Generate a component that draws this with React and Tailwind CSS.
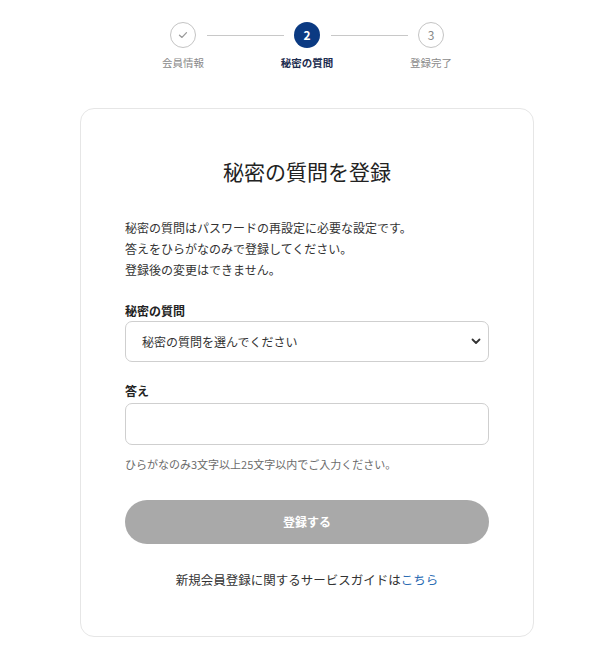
import React from "react";

const font = { fontFamily: '"Noto Sans CJK JP", "Noto Sans", sans-serif' };

function Steps() {
  return (
    <div className="flex items-center pt-[22px]">
      <div className="flex flex-col items-center w-[26px]">
        <div className="w-[26px] h-[26px] rounded-full border border-[#c4c4c4] flex items-center justify-center bg-white">
          <svg width="10" height="8" viewBox="0 0 10 8" fill="none">
            <path d="M1.5 4.2 L4 6.4 L8.5 1.6" stroke="#9a9a9a" strokeWidth="1.3" strokeLinecap="round" strokeLinejoin="round" />
          </svg>
        </div>
      </div>
      <div className="ml-[11px] mr-[10px] w-[77px] h-px bg-[#c8c8c8]" />
      <div className="flex flex-col items-center w-[26px]">
        <div className="w-[26px] h-[26px] rounded-full bg-[#0b3a82] flex items-center justify-center text-white text-[12px] font-bold leading-none">
          2
        </div>
      </div>
      <div className="ml-[11px] mr-[10px] w-[77px] h-px bg-[#c8c8c8]" />
      <div className="flex flex-col items-center w-[26px]">
        <div className="w-[26px] h-[26px] rounded-full border border-[#c4c4c4] flex items-center justify-center text-[#888] text-[12px] leading-none">
          3
        </div>
      </div>
    </div>
  );
}

function StepLabels() {
  return (
    <div className="flex items-start mt-[9px]">
      <div className="w-[26px] flex justify-center">
        <span className="whitespace-nowrap text-[10.5px] leading-[12px] text-[#8a8a8a]">会員情報</span>
      </div>
      <div className="w-[98px]" />
      <div className="w-[26px] flex justify-center">
        <span className="whitespace-nowrap text-[10.5px] leading-[12px] text-[#1d2d50] font-bold">秘密の質問</span>
      </div>
      <div className="w-[98px]" />
      <div className="w-[26px] flex justify-center">
        <span className="whitespace-nowrap text-[10.5px] leading-[12px] text-[#8a8a8a]">登録完了</span>
      </div>
    </div>
  );
}

export default function App() {
  return (
    <div className="w-[600px] h-[646px] bg-white pl-[14px] flex flex-col items-center" style={font}>
      <Steps />
      <StepLabels />
      <div className="mt-[39px] w-[454px] rounded-[14px] border border-[#e6e6e6] bg-white px-[44px] pt-[48px] pb-[46px]">
        <h1 className="text-center text-[21px] leading-[28px] text-[#222] font-normal">秘密の質問を登録</h1>
        <div className="mt-[32px] text-[12px] leading-[21px] text-[#333]">
          <p>秘密の質問はパスワードの再設定に必要な設定です。</p>
          <p>答えをひらがなのみで登録してください。</p>
          <p>登録後の変更はできません。</p>
        </div>
        <div className="mt-[23px] text-[12px] leading-[16px] font-bold text-[#222]">秘密の質問</div>
        <div className="mt-[2px] h-[41px] rounded-[7px] border border-[#cfcfcf] flex items-center justify-between pl-[16px] pr-[7px]">
          <span className="text-[12px] text-[#333]">秘密の質問を選んでください</span>
          <svg width="10" height="7" viewBox="0 0 10 7" fill="none">
            <path d="M1.5 1.5 L5 5 L8.5 1.5" stroke="#333" strokeWidth="1.8" strokeLinecap="round" strokeLinejoin="round" />
          </svg>
        </div>
        <div className="mt-[21px] text-[12px] leading-[16px] font-bold text-[#222]">答え</div>
        <div className="mt-[4px] h-[42px] rounded-[7px] border border-[#cfcfcf]" />
        <p className="mt-[11px] text-[11px] leading-[16px] text-[#6b6b6b]">ひらがなのみ3文字以上25文字以内でご入力ください。</p>
        <div className="mt-[28px] h-[44px] rounded-full bg-[#a9a9a9] flex items-center justify-center text-white text-[12px] font-bold">
          登録する
        </div>
        <p className="mt-[26px] text-center text-[12.5px] leading-[20px] text-[#333]">
          新規会員登録に関するサービスガイドは<span className="text-[#2b6cb3]">こちら</span>
        </p>
      </div>
    </div>
  );
}
